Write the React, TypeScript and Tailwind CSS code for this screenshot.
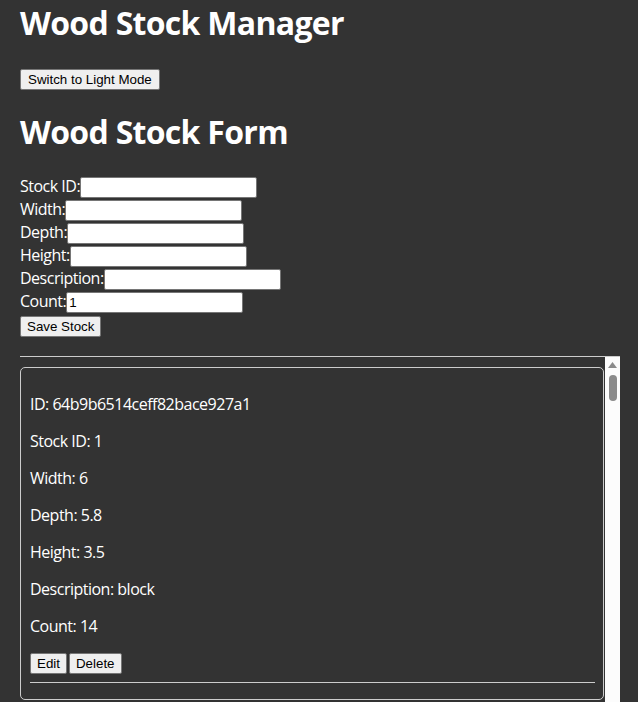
import React from "react";

interface WoodStock {
  _id: string;
  stockId: number;
  width: number;
  depth: number;
  height: number;
  description: string;
  count: number;
}

const stocks: WoodStock[] = [
  { _id: "64b9b6514ceff82bace927a1", stockId: 1, width: 6, depth: 5.8, height: 3.5, description: "block", count: 14 },
  { _id: "64b9b6a74ceff82bace927a4", stockId: 2, width: 4, depth: 2, height: 96, description: "plank", count: 22 },
  { _id: "64b9b6c24ceff82bace927a7", stockId: 3, width: 2, depth: 4, height: 48, description: "stud", count: 40 },
];

const btn =
  "block h-[21px] px-[6px] border border-[#767676] bg-[#efefef] rounded-[2px] text-black text-[13.33px] leading-none tracking-normal font-[family-name:'Liberation_Sans',Arial,sans-serif]";

const input =
  "mt-px h-[21px] w-[177px] border border-[#767676] rounded-[2px] bg-white px-[2px] text-black text-[13.33px] tracking-normal outline-none font-[family-name:'Liberation_Sans',Arial,sans-serif]";

const fields = [
  { label: "Stock ID:", value: "" },
  { label: "Width:", value: "" },
  { label: "Depth:", value: "" },
  { label: "Height:", value: "" },
  { label: "Description:", value: "" },
  { label: "Count:", value: "1" },
];

function StockCard({ stock }: { stock: WoodStock }) {
  return (
    <div className="mt-[10px] mr-[1px] border border-[#ccc] rounded-[5px] py-[10px] pl-[9px] pr-[8px]">
      <p className="my-[16px] leading-[21px]">ID: {stock._id}</p>
      <p className="my-[16px] leading-[21px]">Stock ID: {stock.stockId}</p>
      <p className="my-[16px] leading-[21px]">Width: {stock.width}</p>
      <p className="my-[16px] leading-[21px]">Depth: {stock.depth}</p>
      <p className="my-[16px] leading-[21px]">Height: {stock.height}</p>
      <p className="my-[16px] leading-[21px]">Description: {stock.description}</p>
      <p className="my-[16px] leading-[21px]">Count: {stock.count}</p>
      <div className="flex gap-[2px]">
        <button className={btn}>Edit</button>
        <button className={btn}>Delete</button>
      </div>
      <hr className="mt-[8px] mb-[6px] border-t border-[#ccc]" />
    </div>
  );
}

export default function App() {
  return (
    <div className="min-h-screen overflow-hidden bg-[#333] text-white text-[16px] tracking-[-0.5px] font-[family-name:'Open_Sans',sans-serif]">
      <div className="ml-[20px] w-[600px]">
        <h1 className="pt-[3px] text-[32px] font-bold leading-[40px] tracking-[-0.7px]">Wood Stock Manager</h1>
        <button className={btn + " mt-[26px] px-[7px]"}>Switch to Light Mode</button>

        <h2 className="mt-[22px] text-[32px] font-bold leading-[40px] tracking-[-0.7px]">Wood Stock Form</h2>
        <form className="mt-[24px] flex flex-col items-start" onSubmit={(e) => e.preventDefault()}>
          {fields.map((f) => (
            <div key={f.label} className="flex h-[23px] items-start">
              <label className="leading-[20px]">{f.label}</label>
              <input className={input} defaultValue={f.value} />
            </div>
          ))}
          <button type="submit" className={btn + " mt-[2px]"}>
            Save Stock
          </button>
        </form>

        <hr className="mt-[19px] border-t border-[#ccc]" />

        {/* Stock list with its scrollbar */}
        <div className="flex h-[345px]">
          <div className="flex-1 overflow-y-auto [scrollbar-width:none]">
            {stocks.map((s) => (
              <StockCard key={s._id} stock={s} />
            ))}
          </div>
          <div className="flex w-[15px] flex-col items-center bg-[#fcfcfc]">
            <svg className="mt-[5px]" width="9" height="6" viewBox="0 0 9 6">
              <path d="M4.5 0L9 6H0z" fill="#8b8b8b" />
            </svg>
            <div className="mt-[7px] h-[26px] w-[8px] rounded-full bg-[#8b8b8b]" />
          </div>
        </div>
      </div>
    </div>
  );
}
